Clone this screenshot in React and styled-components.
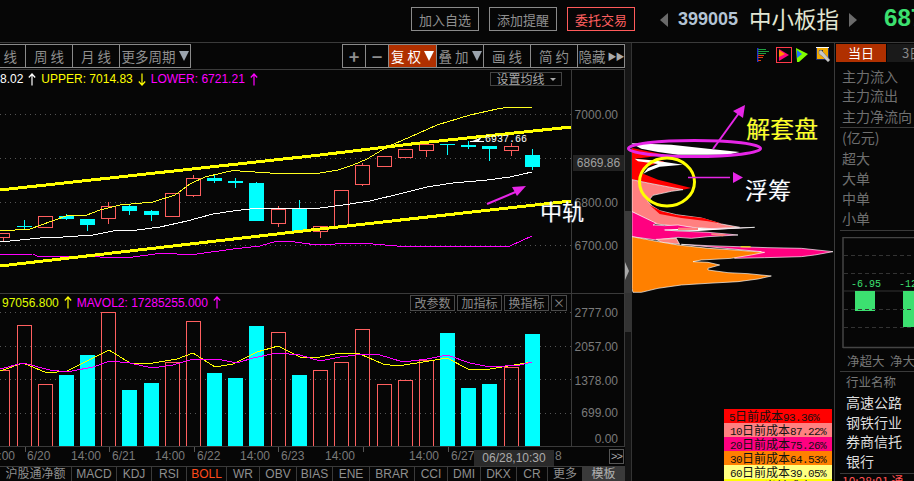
import React from "react";
import styled, { createGlobalStyle } from "styled-components";

const CJK = `"Noto Sans CJK SC", "Liberation Sans", sans-serif`;
const NUM = `"Liberation Sans", "Noto Sans CJK SC", sans-serif`;

const Global = createGlobalStyle`
  html, body { margin: 0; padding: 0; background: #060606; }
  * { box-sizing: border-box; }
`;

const Page = styled.div`
  position: relative; width: 914px; height: 481px; overflow: hidden;
  background: #060606; color: #999; font-family: ${CJK};
  display: flex; flex-direction: column;
`;

/* top bar */
const TopBar = styled.header`
  flex: none; height: 43px; border-bottom: 1px solid #3a3a3a;
  display: flex; align-items: flex-start; padding: 7px 0 0 411px; overflow: hidden;
`;
const ActionButton = styled.button`
  flex: none; width: 68px; height: 24px; margin-right: 10px; padding: 0;
  background: transparent; font: 13px ${CJK}; letter-spacing: 0;
  border: 1px solid ${p => (p.$danger ? "#ff5a5a" : "#8a8a8a")};
  color: ${p => (p.$danger ? "#ff6060" : "#8f8f8f")};
`;
const Nav = styled.div`
  flex: none; width: 0; height: 0; margin: 6px 0 0 ${p => p.$gap}px;
  border-top: 7px solid transparent; border-bottom: 7px solid transparent;
  ${p => (p.$right ? "border-left: 8px solid #6a6a6a;" : "border-right: 8px solid #6a6a6a;")}
`;
const Code = styled.span`
  flex: none; margin: -1px 0 0 10px; font: bold 18px/26px ${NUM}; color: #b4c4d4;
`;
const Name = styled.span`
  flex: none; margin: -6px 0 0 11px; font: 22.5px/34px ${CJK}; color: #e2e6d2;
`;
const Price = styled.span`
  flex: none; margin: -5px 0 0 27px; font: bold 24px/32px ${NUM}; color: #3ce070;
`;

/* body */
const Body = styled.div`flex: 1; min-height: 0; display: flex;`;
const ChartColumn = styled.section`flex: none; width: 625px; display: flex; flex-direction: column;`;
const Toolbar = styled.div`
  flex: none; height: 27px; padding-top: 1px; border-bottom: 1px solid #3a3a3a;
  display: flex; justify-content: space-between;
`;
const ToolGroup = styled.div`display: flex; height: 24px; margin-left: ${p => p.$left || 0}px; margin-right: ${p => p.$right || 0}px;`;
const ToolButton = styled.div`
  flex: none; width: ${p => p.$w}px; height: 24px; margin-left: -1px;
  border: 1px solid #8a8a8a; display: flex; align-items: center; justify-content: center;
  font: ${p => (p.$bold ? "bold 18px" : "13.5px")} ${CJK}; white-space: pre; 
  color: ${p => (p.$active ? "#fff" : "#8f8f8f")};
  background: ${p => (p.$active ? "#b03000" : "transparent")};
`;
const Drop = styled.i`
  flex: none; width: 0; height: 0; margin-left: 3px;
  border-left: 5px solid transparent; border-right: 5px solid transparent;
  border-top: 10px solid ${p => p.$c || "#9aa3ad"};
`;
const Skip = styled.span`font-size: 9px; letter-spacing: -1px; margin-left: 2px; color: #aaa;`;

const ChartRow = styled.div`
  flex: none; height: ${p => p.$h}px; display: flex;
  border-bottom: 1px solid #3a3a3a;
`;
const Plot = styled.div`flex: none; width: 571px; display: flex; flex-direction: column;`;
const PriceInfo = styled.div`
  flex: none; height: ${p => p.$h}px; display: flex; align-items: center; justify-content: space-between;
  font: 12px ${NUM}; white-space: pre; padding-right: ${p => p.$pr || 0}px;
`;
const Readout = styled.div`display: flex; align-items: center; gap: 5px; padding-left: ${p => p.$pl || 0}px;`;
const Tint = styled.span`color: ${p => p.$c};`;
const MaButton = styled.div`
  width: 72px; height: 14px; border: 1px solid #444; color: #a8a8a8; font: 12px/12px ${CJK};
  display: flex; align-items: center; justify-content: center; gap: 5px;
`;
const MaCaret = styled.i`
  width: 0; height: 0; border-left: 3px solid transparent; border-right: 3px solid transparent;
  border-top: 3px solid #aaa;
`;
const Chips = styled.div`display: flex; gap: 2px;`;
const ChipButton = styled.div`
  width: ${p => p.$w}px; height: 16px; border: 1px solid #4a4a4a; color: #8a8a8a;
  font: 12px/14px ${CJK}; text-align: center;
`;
const PlotSvg = styled.svg`flex: 1; display: block; width: 571px; min-height: 0;`;
const Axis = styled.div`
  position: relative; flex: 1; border-left: 1px solid #3a3a3a; border-right: 1px solid #3a3a3a;
`;
const AxisLabel = styled.span`
  position: absolute; right: ${p => (p.$now ? 0 : 6)}px; top: ${p => p.$y}px;
  font: 12px/16px ${NUM}; color: ${p => (p.$now ? "#a0a0a0" : "#7a7a7a")};
  ${p => p.$now && "left: 1px; background: #222; text-align: center; height: 16px;"}
`;

const TimeRow = styled.div`position: relative; flex: none; height: 19px; font: 12px/19px ${NUM}; color: #7a7a7a;`;
const TimeLabel = styled.span`position: absolute; left: ${p => p.$x}px; top: 0;`;
const Tick = styled.i`position: absolute; left: ${p => p.$x}px; top: 0; width: 1px; height: 5px; background: #555;`;
const Cursor = styled.span`
  position: absolute; left: 474px; top: 3px; width: 80px; height: 16px; background: #2a2a2a;
  color: #aaa; text-align: center; font: 12px/16px ${NUM};
`;
const More = styled.span`
  position: absolute; left: 609px; top: 2px; width: 15px; height: 15px; border: 1px solid #555;
  color: #aaa; font: 11px/12px ${NUM}; text-align: center; letter-spacing: -1px;
`;
const TabRow = styled.nav`flex: none; height: 15px; display: flex; border-top: 1px solid #3a3a3a; overflow: hidden;`;
const Tab = styled.div`
  flex: none; width: ${p => p.$w}px; border-right: 1px solid #3a3a3a; text-align: center;
  font: 12px/15px ${NUM}; background: ${p => (p.$fill ? "#3a3a3a" : "transparent")};
  color: ${p => (p.$on ? "#ff4a1a" : p.$fill ? "#b0b0b0" : "#8f8f8f")};
`;

const Gutter = styled.div`flex: none; width: 6px; display: flex; flex-direction: column; position: relative;`;
const Track = styled.div`
  height: ${p => p.$h}px; ${p => p.$grow && "flex: 1;"} background: ${p => p.$c};
`;
const Grip = styled.i`
  position: absolute; left: 0; top: 219px; width: 0; height: 0;
  border-top: 9px solid transparent; border-bottom: 9px solid transparent; border-left: 4px solid #aaa;
`;

/* chip panel */
const ChipPanel = styled.section`
  flex: none; width: 204px; display: flex; flex-direction: column;
  border-left: 1px solid #333; border-right: 1px solid #3a3a3a;
`;
const IconRow = styled.div`
  flex: none; height: 22px; display: flex; justify-content: flex-end; align-items: center; padding: 2px 3px 0 0;
`;
const IconSlot = styled.span`
  display: flex; align-items: center; height: 16px; margin-left: ${p => p.$ml || 0}px;
`;
const ChipSvg = styled.svg`flex: none; width: 202px; height: 229px; display: block;`;
const Legend = styled.div`
  flex: none; align-self: flex-end; width: 108px; margin: 115px 2px 0 0;
`;
const LegendRow = styled.div`
  height: 14px; padding-left: ${p => p.$pad}px; background: ${p => p.$c}; color: #111;
  font: 12px/14px ${CJK}; white-space: nowrap; overflow: hidden;
`;
const Digits = styled.span`font: 11px/14px "Liberation Mono", monospace; letter-spacing: -0.6px;`;

/* side panel */
const Side = styled.aside`flex: 1; min-width: 0; display: flex; flex-direction: column; overflow: hidden;`;
const SideTabs = styled.div`flex: none; display: flex; gap: 1px; padding: 1px 0 0 1px; height: 19px;`;
const SideTab = styled.div`
  flex: none; width: 50px; height: 18px; font: 13px/18px ${CJK}; text-align: center;
  background: ${p => (p.$on ? "#b03000" : "#1a1a1a")}; color: ${p => (p.$on ? "#fff" : "#888")};
`;
const SideRow = styled.div`
  flex: none; height: ${p => p.$h}px; padding-left: ${p => p.$pl || 7}px; white-space: pre;
  font: ${p => p.$fs || 14}px/${p => p.$h}px ${CJK};
  color: ${p => p.$c || "#6f6f6f"}; margin-top: ${p => p.$mt || 0}px;
`;
const SideRule = styled.div`flex: none; height: 1px; margin-left: 5px; background: #3a3a3a; margin-top: ${p => p.$mt || 0}px;`;
const BarBox = styled.svg`
  flex: none; display: block; width: 79px; height: 112px; margin-top: 6px; 
`;

/* annotations */
const Marks = styled.svg`position: absolute; left: 0; top: 0; width: 914px; height: 481px; pointer-events: none;`;
const Note = styled.span`
  position: absolute; left: ${p => p.$x}px; top: ${p => p.$y}px; color: ${p => p.$c};
  font: ${p => p.$fs}px/${p => p.$fs + 4}px ${CJK}; white-space: nowrap; text-shadow: 1px 0 0 rgba(120,180,255,.35);
`;

/* data */
const UP = "#ff5f5f";
const DOWN = "#00ffff";
const candles = [
  [-4, 10, 233, 237, 233, 242, 1], [17, 32, 226, 227, 220, 229, 0], [38, 53, 216, 227, 216, 227, 1],
  [59, 74, 216, 219, 214, 220, 0], [80, 95, 219, 225, 219, 231, 0], [101, 116, 206, 218, 202, 224, 1],
  [122, 137, 206, 211, 205, 215, 0], [144, 159, 211, 215, 210, 221, 0], [165, 180, 193, 216, 193, 216, 1],
  [186, 201, 178, 195, 175, 197, 1], [207, 222, 178, 181, 174, 183, 0], [228, 243, 181, 183, 178, 188, 0],
  [249, 264, 183, 221, 182, 221, 0], [271, 286, 209, 223, 206, 227, 1], [292, 307, 209, 231, 200, 231, 0],
  [313, 328, 226, 231, 226, 238, 1], [334, 349, 190, 226, 190, 226, 1], [355, 370, 165, 184, 163, 186, 1],
  [377, 392, 156, 166, 156, 166, 1], [398, 413, 149, 157, 149, 157, 1], [419, 434, 144, 150, 144, 157, 1],
  [440, 455, 144, 145, 144, 155, 0], [461, 476, 145, 147, 141, 149, 0], [482, 497, 146, 149, 146, 161, 0],
  [504, 519, 146, 150, 143, 156, 1], [525, 540, 155, 167, 149, 170, 0],
];
const volumes = [
  [-4, 10, 370, 1], [17, 32, 325, 1], [38, 53, 384, 1], [59, 74, 375, 0], [80, 95, 355, 0], [101, 116, 312, 1],
  [122, 137, 390, 0], [144, 159, 383, 0], [165, 180, 362, 1], [186, 201, 321, 1], [207, 222, 373, 0], [228, 243, 378, 0],
  [249, 264, 326, 0], [271, 286, 332, 1], [292, 307, 375, 0], [313, 328, 370, 1], [334, 349, 362, 1], [355, 370, 329, 1],
  [377, 392, 384, 1], [398, 413, 380, 1], [419, 434, 360, 1], [440, 455, 333, 0], [461, 476, 388, 0], [482, 497, 384, 0],
  [504, 519, 367, 1], [525, 540, 334, 0],
];
const UPPER = "0,190 320,155 420,143 571,127";
const LOWER = "0,266 320,229 571,201";
const MA_Y = "0,231 30,229 66,216 87,215 100,210 120,205 153,202 175,195 190,184 205,177 235,170 240,171 270,173 290,174 320,173 338,170 353,165 367,159 387,147 410,137 437,125 470,115 497,109 510,107 520,107 532,108";
const MA_W = "0,242 20,240 40,238 63,237 93,235 113,231 137,230 160,227 187,221 213,214 233,211 250,209 267,208 320,208 343,205 370,201 403,193 427,187 453,183 487,180 510,177 532,172";
const MA_M = "0,255 33,254 37,256 90,256 110,258 133,257 163,253 190,255 233,249 260,246 277,241 287,241 317,245 353,243 373,244 397,246 510,246 532,236";
const VOL_Y = "0,371 23,363 47,373 67,371 93,358 109,350 130,363 153,363 177,359 193,353 215,367 233,364 257,352 278,346 300,357 320,357 340,353 360,354 383,364 397,366 417,363 447,358 468,369 490,369 520,364 532,362";
const VOL_M = "0,369 23,363 50,370 67,372 93,367 110,361 130,363 152,368 173,365 193,359 217,359 237,363 253,358 277,353 300,355 320,361 340,357 363,354 380,355 403,362 427,359 447,355 470,363 490,367 520,365 532,362";

const GridLine = ({ y }) => (
  <line x1="0" x2="571" y1={y} y2={y} stroke="#555" strokeWidth="1" strokeDasharray="1 4" />
);

function Candle({ c }) {
  const [l, r, t, b, hi, lo, up] = c;
  const m = (l + r) / 2;
  const color = up ? UP : DOWN;
  return (
    <g shapeRendering="crispEdges">
      <line x1={m} x2={m} y1={hi} y2={lo} stroke={color} strokeWidth="1" />
      {up ? (
        <rect x={l + 0.5} y={t + 0.5} width={r - l - 1} height={b - t} fill="#060606" stroke={color} strokeWidth="1.3" />
      ) : (
        <rect x={l} y={t} width={r - l} height={Math.max(b - t, 1)} fill={color} />
      )}
    </g>
  );
}

const Arrow = ({ c, down }) => (
  <svg width="8" height="13" viewBox="0 0 8 13" style={down ? { transform: "scaleY(-1)" } : undefined}>
    <path d="M4 12.5 V1 M0.8 4.5 L4 1 L7.2 4.5" fill="none" stroke={c} strokeWidth="1.2" />
  </svg>
);

const BarsIcon = () => (
  <svg width="13" height="14" viewBox="0 0 13 14">
    <rect x="0" y="0" width="1.5" height="14" fill="#2030d0" />
    <rect x="1" y="1" width="8" height="1" fill="#20a040" />
    <rect x="1" y="3" width="11" height="1" fill="#20a040" />
    <rect x="1" y="5" width="8" height="1" fill="#20a040" />
    <rect x="1" y="7" width="6" height="1" fill="#e04010" />
    <rect x="1" y="9" width="5" height="1" fill="#e04010" />
    <rect x="1" y="12" width="3" height="1" fill="#e04010" />
  </svg>
);
const FlagIcon = () => (
  <svg width="16" height="16" viewBox="0 0 16 16">
    <rect x="0.5" y="0.5" width="15" height="15" fill="none" stroke="#ff3a4a" />
    <polygon points="3,2 13,8 3,14" fill="#ff0080" />
    <polygon points="3,3 9,7 3,10" fill="#ff9000" />
  </svg>
);
const ConeIcon = () => (
  <svg width="12" height="14" viewBox="0 0 12 14">
    <polygon points="0,0 12,6 3,14 1,14" fill="#80ff00" />
    <polygon points="1,2 6,6 1,10" fill="#2070ff" />
  </svg>
);
const ToolIcon = () => (
  <svg width="15" height="16" viewBox="0 0 15 16">
    <rect x="0.5" y="0.5" width="12" height="12" fill="#f0a800" stroke="#1a2a6a" />
    <rect x="0" y="0" width="13" height="1" fill="#fff" />
    <rect x="3" y="3" width="4" height="4" fill="#333" />
    <path d="M3 4 L5 3 L8 6 L14 13 L12 15 L6 9 L3 7 Z" fill="#c8c8c8" stroke="#777" strokeWidth=".6" />
  </svg>
);

const legend = [
  ["#ff0000", 5, "5", "93.36%"],
  ["#ff8080", 6, "10", "87.22%"],
  ["#ff0080", 6, "20", "75.26%"],
  ["#ff8000", 6, "30", "64.53%"],
  ["#ffff80", 6, "60", "39.05%"],
];

const tabs = [
  ["沪股通净额", 72], ["MACD", 45], ["KDJ", 35], ["RSI", 35], ["BOLL", 40], ["WR", 33], ["OBV", 37], ["BIAS", 36],
  ["ENE", 37], ["BRAR", 45], ["CCI", 33], ["DMI", 33], ["DKX", 36], ["CR", 31], ["更多", 35],
];

const timeLabels = [
  [-15, "14:00"], [27, "6/20"], [71, "14:00"], [112, "6/21"], [155, "14:00"], [197, "6/22"], [240, "14:00"],
  [281, "6/23"], [325, "14:00"], [409, "14:00"], [451, "6/27"], [555, "8"],
];

export default function App() {
  return (
    <Page>
      <Global />
      <TopBar>
        <ActionButton>加入自选</ActionButton>
        <ActionButton>添加提醒</ActionButton>
        <ActionButton $danger>委托交易</ActionButton>
        <Nav $gap={15} />
        <Code>399005</Code>
        <Name>中小板指</Name>
        <Nav $gap={10} $right />
        <Price>6871</Price>
      </TopBar>
      <Body>
        <ChartColumn>
          <Toolbar>
            <ToolGroup $left={-21}>
              <ToolButton $w={48}>{"日 线"}</ToolButton>
              <ToolButton $w={48}>{"周 线"}</ToolButton>
              <ToolButton $w={48}>{"月 线"}</ToolButton>
              <ToolButton $w={72}>更多周期<Drop /></ToolButton>
            </ToolGroup>
            <ToolGroup $right={0}>
              <ToolButton $w={24} $bold>+</ToolButton>
              <ToolButton $w={24} $bold>−</ToolButton>
              <ToolButton $w={49} $active>{"复 权"}<Drop $c="#fff" /></ToolButton>
              <ToolButton $w={48}>{"叠 加"}<Drop /></ToolButton>
              <ToolButton $w={48}>{"画 线"}</ToolButton>
              <ToolButton $w={48}>{"简 约"}</ToolButton>
              <ToolButton $w={48}>隐藏<Skip>▶▶</Skip></ToolButton>
            </ToolGroup>
          </Toolbar>
          <ChartRow $h={224}>
            <Plot>
              <PriceInfo $h={18} $pr={9}>
                <Readout>
                  <Tint $c="#fff">8.02</Tint>
                  <Arrow c="#fff" />
                  <Tint $c="#ffff00">UPPER: 7014.83</Tint>
                  <Arrow c="#ffff00" down />
                  <Tint $c="#ff00ff">LOWER: 6721.21</Tint>
                  <Arrow c="#ff00ff" />
                </Readout>
                <MaButton>设置均线<MaCaret /></MaButton>
              </PriceInfo>
              <PlotSvg viewBox="0 88 571 205" preserveAspectRatio="none">
                <GridLine y={114.5} />
                <GridLine y={158.5} />
                <GridLine y={202.5} />
                <GridLine y={245.5} />
                {candles.map((c, i) => <Candle key={i} c={c} />)}
                <polyline points={MA_Y} fill="none" stroke="#ffff20" strokeWidth="1" shapeRendering="crispEdges" />
                <polyline points={MA_W} fill="none" stroke="#fff" strokeWidth="1" shapeRendering="crispEdges" />
                <polyline points={MA_M} fill="none" stroke="#ff00ff" strokeWidth="1" shapeRendering="crispEdges" />
                <polyline points={UPPER} fill="none" stroke="#ffff00" strokeWidth="3" shapeRendering="crispEdges" />
                <polyline points={LOWER} fill="none" stroke="#ffff00" strokeWidth="3" shapeRendering="crispEdges" />
                <path d="M470 142 L482 137 L478 142 Z" fill="#fff" />
                <line x1="470" x2="484" y1="141.5" y2="141.5" stroke="#fff" />
                <text x="485" y="142" fill="#fff" fontFamily="Liberation Mono, monospace" fontSize="10">6937.66</text>
              </PlotSvg>
            </Plot>
            <Axis>
              <AxisLabel $y={37}>7000.00</AxisLabel>
              <AxisLabel $y={85} $now>6869.86</AxisLabel>
              <AxisLabel $y={125}>6800.00</AxisLabel>
              <AxisLabel $y={168}>6700.00</AxisLabel>
            </Axis>
          </ChartRow>
          <ChartRow $h={153}>
            <Plot>
              <PriceInfo $h={17} $pr={4}>
                <Readout $pl={2}>
                  <Tint $c="#e0ff00">97056.800</Tint>
                  <Arrow c="#ffff00" />
                  <Tint $c="#ff00ff">MAVOL2: 17285255.000</Tint>
                  <Arrow c="#ff00ff" />
                </Readout>
                <Chips>
                  <ChipButton $w={45}>改参数</ChipButton>
                  <ChipButton $w={45}>加指标</ChipButton>
                  <ChipButton $w={45}>换指标</ChipButton>
                  <ChipButton $w={16}>×</ChipButton>
                </Chips>
              </PriceInfo>
              <PlotSvg viewBox="0 311 571 135" preserveAspectRatio="none">
                <GridLine y={312.5} />
                <GridLine y={346.5} />
                <GridLine y={379.5} />
                <GridLine y={413.5} />
                {volumes.map(([l, r, t, up], i) =>
                  up ? (
                    <rect key={i} x={l + 0.5} y={t + 0.5} width={r - l - 1} height={446 - t} fill="none" stroke={UP} strokeWidth="1.3" shapeRendering="crispEdges" />
                  ) : (
                    <rect key={i} x={l} y={t} width={r - l} height={446 - t} fill={DOWN} />
                  )
                )}
                <polyline points={VOL_Y} fill="none" stroke="#ffff00" strokeWidth="1" shapeRendering="crispEdges" />
                <polyline points={VOL_M} fill="none" stroke="#ff00ff" strokeWidth="1" shapeRendering="crispEdges" />
              </PlotSvg>
            </Plot>
            <Axis>
              <AxisLabel $y={11}>2777.00</AxisLabel>
              <AxisLabel $y={45}>2057.00</AxisLabel>
              <AxisLabel $y={79}>1378.00</AxisLabel>
              <AxisLabel $y={111}>699.00</AxisLabel>
              <AxisLabel $y={137}>0.00</AxisLabel>
            </Axis>
          </ChartRow>
          <TimeRow>
            {[25, 109, 194, 278, 363, 448].map(x => <Tick key={x} $x={x} />)}
            {timeLabels.map(([x, t]) => <TimeLabel key={x} $x={x}>{t}</TimeLabel>)}
            <Cursor>06/28,10:30</Cursor>
            <More>&gt;&gt;</More>
          </TimeRow>
          <TabRow>
            {tabs.map(([t, w]) => <Tab key={t} $w={w} $on={t === "BOLL"}>{t}</Tab>)}
            <Tab $w={42} $fill>模板</Tab>
          </TabRow>
        </ChartColumn>
        <Gutter>
          <Track $h={168} $c="#161616" />
          <Track $h={82} $c="#3a3a3a" />
          <Track $h={39} $c="#333" />
          <Track $grow $c="#141414" />
          <Grip />
        </Gutter>
        <ChipPanel>
          <IconRow>
            <IconSlot><BarsIcon /></IconSlot>
            <IconSlot $ml={6}><FlagIcon /></IconSlot>
            <IconSlot $ml={4}><ConeIcon /></IconSlot>
            <IconSlot $ml={8}><ToolIcon /></IconSlot>
          </IconRow>
          <ChipSvg viewBox="632 65 202 229">
            <g transform="translate(628 138) scale(.3333)">
              <polygon points="12,30 110,50 60,58 20,62 110,70 60,85 40,105 90,125 190,150 165,155 12,125" fill="#ff0000" />
              <polygon points="10,16 130,20 240,32 335,42 300,50 150,50 90,42 40,32" fill="#fff" />
              <polygon points="20,62 85,68 165,80 95,86 60,100 45,108 60,90 90,78 30,70" fill="#fff" />
              <polygon points="12,125 60,135 165,155 130,160 75,172 60,190 72,204 95,218 145,230 220,240 280,258 335,268 250,272 150,265 85,258 12,221" fill="#ff8080" stroke="#fff" strokeWidth="2" />
              <polygon points="65,201 100,220 150,232 225,240 285,258 240,250 160,240 95,228" fill="#ff0000" />
            </g>
            <g transform="translate(628 205) scale(.3333)">
              <polygon points="12,20 85,55 75,60 110,62 150,60 220,72 300,70 380,67 280,72 210,75 110,75 150,78 240,82 330,90 240,95 190,100 150,97 85,105 12,95" fill="#ff0080" stroke="#fff" strokeWidth="2" />
              <polygon points="105,75 200,68 270,72 380,67 300,72 210,78" fill="#fff" />
              <polygon points="150,68 210,68 210,75 150,75" fill="#ff8080" />
              <polygon points="250,85 295,88 285,94 250,90" fill="#ff8080" />
              <polygon points="85,103 145,100 155,118 100,112" fill="#ff8080" stroke="#fff" strokeWidth="2" />
              <polygon points="160,118 240,122 420,128 520,130 615,140 560,150 520,155 410,158 320,160 320,155 400,140 240,125" fill="#ff0080" stroke="#fff" strokeWidth="2" />
              <polygon points="12,95 80,108 150,120 240,130 320,135 410,142 370,150 310,160 220,165 195,170 240,172 275,180 240,190 240,195 300,203 360,206 430,213 390,222 330,230 240,235 160,240 90,250 40,262 15,262 12,250" fill="#ff8000" stroke="#fff" strokeWidth="2" />
              <polygon points="338,124 368,124 368,127 338,127" fill="#ffff00" />
            </g>
          </ChipSvg>
          <Legend>
            {legend.map(([c, pad, d, v]) => (
              <LegendRow key={d} $c={c} $pad={pad}>
                <Digits>{d}</Digits>日前成本<Digits>{v}</Digits>
              </LegendRow>
            ))}
            <LegendRow $c="#ffff00" $pad={40}>当前成本</LegendRow>
          </Legend>
        </ChipPanel>
        <Side>
          <SideTabs>
            <SideTab $on>当日</SideTab>
            <SideTab>3日</SideTab>
          </SideTabs>
          <SideRow $h={20} $mt={4}>主力流入</SideRow>
          <SideRow $h={19}>主力流出</SideRow>
          <SideRow $h={22}>主力净流向</SideRow>
          <SideRule />
          <SideRow $h={19}>(亿元)</SideRow>
          <SideRow $h={20} $mt={1}>超大</SideRow>
          <SideRow $h={20}>大单</SideRow>
          <SideRow $h={20}>中单</SideRow>
          <SideRow $h={20}>小单</SideRow>
          <SideRule $mt={2} />
          <BarBox viewBox="835 237 79 112">
            <path d="M843 348 L843 237.5 L914 237.5 M843 347.5 L914 347.5" fill="none" stroke="#444" strokeWidth="1.5" />
            <line x1="844" x2="914" y1="255.5" y2="255.5" stroke="#333" strokeDasharray="4 3" />
            <line x1="844" x2="914" y1="273.5" y2="273.5" stroke="#333" strokeDasharray="4 3" />
            <text x="851" y="287" fill="#3ce070" fontFamily="Liberation Mono, monospace" fontSize="11" textLength="30" lengthAdjust="spacingAndGlyphs">-6.95</text>
            <text x="899" y="287" fill="#3ce070" fontFamily="Liberation Mono, monospace" fontSize="11" textLength="30" lengthAdjust="spacingAndGlyphs">-12.4</text>
            <line x1="844" x2="914" y1="291" y2="291" stroke="#333" />
            <rect x="855" y="291" width="20" height="20" fill="#3ce070" />
            <rect x="903" y="291" width="20" height="36" fill="#3ce070" />
            <line x1="844" x2="914" y1="309.5" y2="309.5" stroke="#333" strokeDasharray="4 3" />
            <line x1="844" x2="914" y1="327.5" y2="327.5" stroke="#333" strokeDasharray="4 3" />
          </BarBox>
          <SideRow $h={21} $mt={1} $pl={12} $fs={12.5} $c="#777">{"净超大  净大"}</SideRow>
          <SideRule />
          <SideRow $h={20} $pl={11} $fs={12.5} $c="#777">行业名称</SideRow>
          <SideRow $h={20} $pl={11} $fs={14} $c="#ddd">高速公路</SideRow>
          <SideRow $h={20} $pl={11} $fs={14} $c="#ddd">钢铁行业</SideRow>
          <SideRow $h={19} $pl={11} $fs={14} $c="#ddd">券商信托</SideRow>
          <SideRow $h={20} $pl={11} $fs={14} $c="#ddd">银行</SideRow>
          <SideRule $mt={2} />
          <SideRow $h={14} $mt={0} $fs={12} $c="#ff5050">10:28:01 通</SideRow>
        </Side>
      </Body>

      <Marks viewBox="0 0 914 481">
        <ellipse cx="694.5" cy="148.5" rx="66" ry="8" fill="none" stroke="#e626e6" strokeWidth="3" />
        <ellipse cx="667" cy="182" rx="27.5" ry="24" fill="none" stroke="#ffff00" strokeWidth="3" />
        <line x1="713" y1="149" x2="739" y2="113" stroke="#e626e6" strokeWidth="2" />
        <polygon points="745,105 743,118 733,111" fill="#e626e6" />
        <line x1="688" y1="177.5" x2="730" y2="177.5" stroke="#e626e6" strokeWidth="1.5" />
        <polygon points="743,177.5 733,172 733,183" fill="#e626e6" />
        <line x1="487" y1="204" x2="518" y2="191" stroke="#e626e6" strokeWidth="2" />
        <polygon points="526,186 517,196 512,187" fill="#e626e6" />
      </Marks>
      <Note $x={746} $y={114} $fs={24} $c="#ffff20">解套盘</Note>
      <Note $x={745} $y={176} $fs={23} $c="#fff">浮筹</Note>
      <Note $x={540} $y={197} $fs={22} $c="#fff">中轨</Note>
    </Page>
  );
}
